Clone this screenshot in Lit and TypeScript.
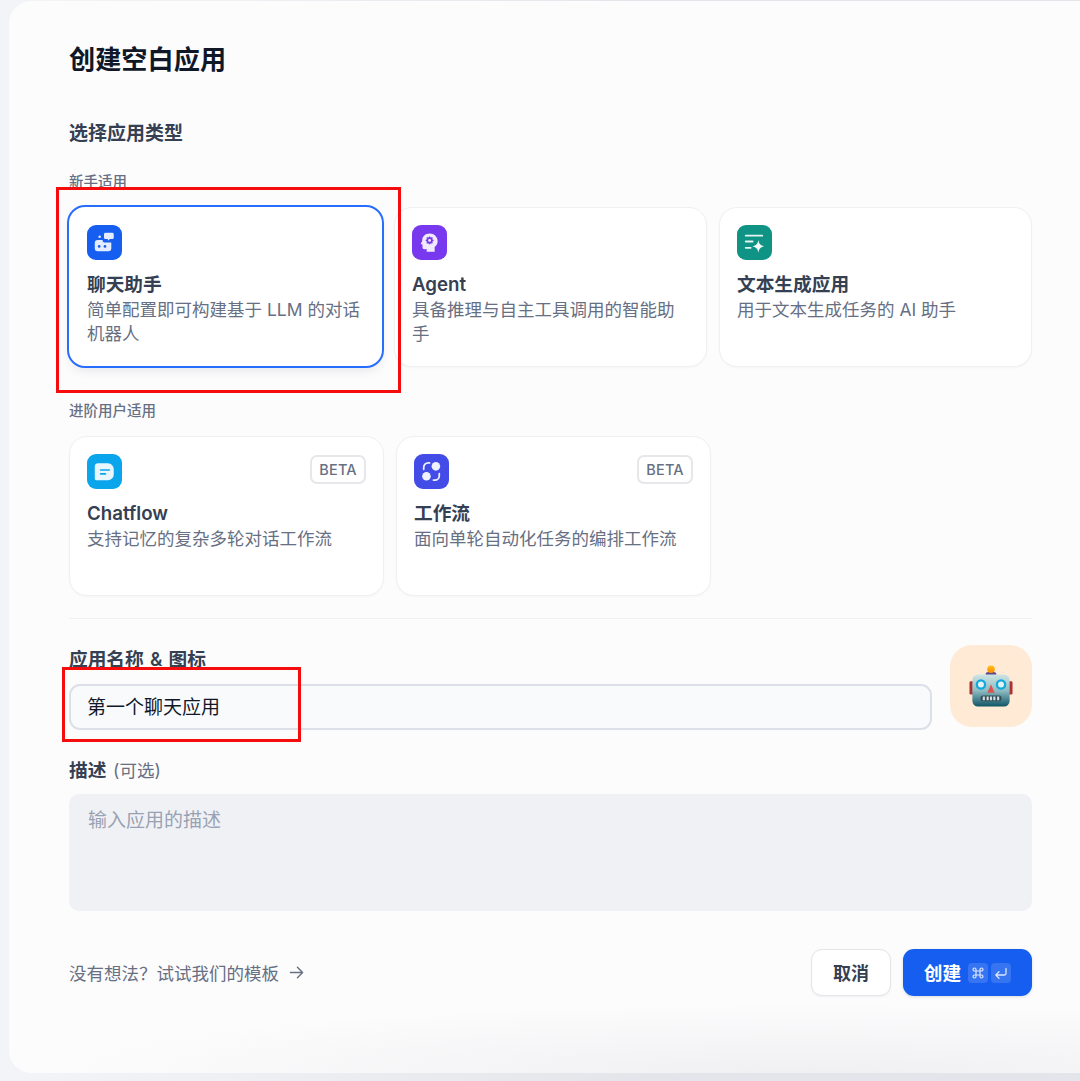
import { LitElement, html, css, svg } from "lit";
import { customElement } from "lit/decorators.js";

const icons: Record<string, unknown> = {
  chat: svg`<circle cx="13" cy="12" r="1.300" fill="#dfe8ff"/><path d="M19 8h7a1.500 1.500 0 0 1 1.500 1.500v3.500a1.500 1.500 0 0 1-1.500 1.500h-2.500l-2 1.800v-1.800H19a1.500 1.500 0 0 1-1.500-1.500V9.500A1.500 1.500 0 0 1 19 8z" fill="#e4ecff"/><path d="M11 15.500h5v.5a2 2 0 0 0 2 2h7v6.500a2.500 2.500 0 0 1-2.500 2.500h-12A2.500 2.500 0 0 1 8 24.500v-6a3 3 0 0 1 3-3z" fill="#e4ecff"/><circle cx="12.500" cy="22" r="1.400" fill="#155eef"/><circle cx="18.500" cy="22" r="1.400" fill="#155eef"/>`,
  agent: svg`<g transform="translate(2 3.200) scale(.87)"><path d="M18.500 6.500c-5 0-8.700 3.400-8.700 8 0 .8-.4 1.400-1.300 3-.5.8-.3 1.400.6 1.700l1 .3v3.200c0 1.500 1 2.300 2.400 2.200l2.500-.2v3.300h9.500v-5.800c2.300-1.600 3.500-4 3.500-6.800 0-4.700-4-8.900-9.500-8.900z" fill="#f1eaff"/><g fill="none" stroke="#7839ee"><circle cx="18.500" cy="14.500" r="2.700" stroke-width="2"/><path d="M18.500 9.800v1.800M18.500 17.400v1.800M13.800 14.500h1.800M21.400 14.500h1.800M15.200 11.200l1.200 1.200M20.600 16.600l1.200 1.200M21.800 11.200l-1.200 1.200M16.400 16.600l-1.200 1.200" stroke-width="1.700"/></g></g>`,
  text: svg`<g stroke="#e6f6f2" stroke-width="1.900" stroke-linecap="round" fill="none"><path d="M9 11h17M9 17h7M9 23.500h5"/></g><path d="M22 15.500c.7 4 2.100 5.600 6.200 6.500-4.100.9-5.500 2.500-6.200 6.500-.7-4-2.100-5.600-6.200-6.500 4.100-.9 5.500-2.500 6.200-6.500z" fill="#f0fbf8"/>`,
  flow: svg`<path d="M11.500 9.500h10a6 6 0 0 1 6 6v5.500a6 6 0 0 1-6 6H9.500A1.500 1.500 0 0 1 8 25.500V13a3.500 3.500 0 0 1 3.500-3.500z" fill="#e8f6fe"/><path d="M14 16.500h9M14 20.500h5" stroke="#0ba5ec" stroke-width="1.700" stroke-linecap="round"/>`,
  work: svg`<circle cx="22.500" cy="12.700" r="4.400" fill="#f0f1ff"/><circle cx="12.800" cy="22.800" r="4.400" fill="#f0f1ff"/><g fill="none" stroke="#f0f1ff" stroke-width="1.800" stroke-linecap="round"><path d="M16 9.200h-1.500A4.500 4.500 0 0 0 10 13.700v2"/><path d="M20 26.800h1.500a4.500 4.500 0 0 0 4.500-4.500v-2"/></g>`,
};

interface Card { icon: string; color: string; title: string; desc: string; beta?: boolean; selected?: boolean; }

const basic: Card[] = [
  { icon: "chat", color: "#155eef", title: "聊天助手", desc: "简单配置即可构建基于 LLM 的对话机器人", selected: true },
  { icon: "agent", color: "#7839ee", title: "Agent", desc: "具备推理与自主工具调用的智能助手" },
  { icon: "text", color: "#0e9384", title: "文本生成应用", desc: "用于文本生成任务的 AI 助手" },
];
const advanced: Card[] = [
  { icon: "flow", color: "#0ba5ec", title: "Chatflow", desc: "支持记忆的复杂多轮对话工作流", beta: true },
  { icon: "work", color: "#444ce7", title: "工作流", desc: "面向单轮自动化任务的编排工作流", beta: true },
];

@customElement("app-root")
export class AppRoot extends LitElement {
  static styles = css`
    :host {
      display: block;
      position: relative;
      height: 1081px;
      overflow: hidden;
      background: linear-gradient(90deg, #f2f4f8 0%, #eff0f4 20%, #e4e5ea 60%, #e4e5ea 100%);
      font-family: Inter, "Noto Sans CJK SC", "Noto Sans", sans-serif;
      color: #354052;
    }
    .dialog {
      box-sizing: border-box;
      margin-left: 9px;
      width: 1090px;
      height: 1072px;
      position: relative;
      top: 1px;
      border-radius: 22px;
      padding: 43px 0 0 60px;
      background:
        radial-gradient(ellipse 760px 70px at 800px 1072px, #f0f0f2 0%, rgba(240, 240, 242, 0) 100%),
        #fcfcfd;
    }
    .body { width: 963px; }
    h1 {
      margin: 0;
      font-size: 26.200px;
      line-height: 32px;
      font-weight: 600;
      color: #101828;
    }
    h2 {
      margin: 45px 0 0;
      font-size: 19px;
      line-height: 26px;
      font-weight: 600;
      color: #354052;
    }
    .group {
      margin: 25px 0 0;
      font-size: 14.500px;
      line-height: 20px;
      font-weight: 500;
      color: #676f83;
    }
    .group.second { margin-top: 34px; }
    .row {
      display: grid;
      gap: 12px;
      margin-top: 15px;
    }
    .row.three { grid-template-columns: 313px 313px 313px; }
    .row.two { grid-template-columns: 315px 315px; }
    .card {
      box-sizing: border-box;
      height: 160px;
      padding: 17px;
      background: #fff;
      border: 1px solid #f0f0f3;
      border-radius: 18px;
      box-shadow: 0 1px 2px rgba(16, 24, 40, 0.03);
    }
    .card.selected {
      border: 2px solid #296dff;
      height: 163px;
      margin: -2px -2px -1px -2px;
      padding: 18px;
      box-shadow: 0 6px 12px -4px rgba(16, 24, 40, 0.1);
    }
    .head {
      display: flex;
      justify-content: space-between;
      align-items: flex-start;
      height: 36px;
    }
    .tile {
      display: block;
      width: 35px;
      height: 35px;
      border-radius: 9px;
    }
    .beta {
      box-sizing: border-box;
      width: 56px;
      height: 29px;
      margin-top: 1px;
      display: flex;
      align-items: center;
      justify-content: center;
      border: 2px solid #e6e7eb;
      border-radius: 7px;
      font-size: 14.500px;
      font-weight: 500;
      letter-spacing: 0.2px;
      color: #676f83;
    }
    .title {
      margin-top: 12px;
      font-size: 18.700px;
      line-height: 24px;
      font-weight: 600;
      color: #354052;
    }
    .desc {
      margin-top: 1px;
      font-size: 17.500px;
      line-height: 24px;
      color: #676f83;
    }
    hr {
      border: 0;
      height: 1px;
      margin: 22px 0 0;
      background: #eff0f3;
    }
    .name-row {
      display: flex;
      gap: 18px;
      margin-top: 26px;
      align-items: flex-start;
    }
    .name-col { flex: 1; padding-top: 3px; }
    .label {
      font-size: 18.700px;
      line-height: 24px;
      font-weight: 600;
      color: #354052;
    }
    .label .amp { margin: 0 1.500px; }
    .label .opt {
      font-weight: 400;
      font-size: 17.500px;
      color: #676f83;
      margin-left: 2px;
    }
    .input {
      box-sizing: border-box;
      height: 46px;
      margin-top: 12px;
      padding: 0 16px 3px;
      display: flex;
      align-items: center;
      background: #f9fafc;
      border: 2px solid #dde0e8;
      border-radius: 11px;
      font-size: 19px;
      color: #101828;
    }
    .emoji {
      width: 82px;
      height: 82px;
      border-radius: 22px;
      background: #ffead5;
      display: flex;
      align-items: center;
      justify-content: center;
      flex: none;
    }
    .desc-label { margin-top: 29px; }
    .area {
      box-sizing: border-box;
      height: 117px;
      margin-top: 11px;
      padding: 14px 19px;
      border-radius: 10px;
      background: #f0f1f5;
      font-size: 19px;
      line-height: 26px;
      color: #98a2b2;
    }
    .foot {
      display: flex;
      align-items: center;
      justify-content: space-between;
      margin-top: 38px;
    }
    .link {
      display: flex;
      align-items: center;
      gap: 10px;
      font-size: 17.500px;
      color: #676f83;
    }
    .actions { display: flex; gap: 12px; }
    .btn {
      box-sizing: border-box;
      height: 47px;
      display: flex;
      align-items: center;
      justify-content: center;
      border-radius: 11px;
      font-size: 18px;
      font-weight: 600;
    }
    .cancel {
      width: 80px;
      padding-bottom: 2px;
      background: #fff;
      border: 1px solid #e4e5e9;
      color: #354052;
      box-shadow: 0 1px 2px rgba(16, 24, 40, 0.05);
    }
    .create {
      width: 129px;
      gap: 3px;
      background: #155eef;
      color: #fff;
      font-size: 18.700px;
      box-shadow: 0 1px 3px rgba(16, 24, 40, 0.15);
    }
    .create .txt { margin: 0 4px 2px 0; }
    .kbd {
      width: 20px;
      height: 20px;
      border-radius: 4px;
      background: rgba(255, 255, 255, 0.14);
      display: flex;
      align-items: center;
      justify-content: center;
    }
    .mark {
      position: absolute;
      box-sizing: border-box;
      border: 3px solid #f50d0d;
    }
    .mark.a { left: 56px; top: 187px; width: 345px; height: 206px; }
    .mark.b { left: 62px; top: 667px; width: 239px; height: 75px; }
  `;

  private card(c: Card) {
    return html`<div class="card ${c.selected ? "selected" : ""}">
      <div class="head">
        <svg class="tile" viewBox="0 0 36 36" style="background:${c.color}">${icons[c.icon]}</svg>
        ${c.beta ? html`<div class="beta">BETA</div>` : ""}
      </div>
      <div class="title">${c.title}</div>
      <div class="desc">${c.desc}</div>
    </div>`;
  }

  private robot() {
    return html`<svg width="44" height="44" viewBox="0 0 46 46">
      <defs>
        <linearGradient id="rb" x1="0" y1="0" x2="0" y2="1">
          <stop offset="0" stop-color="#cfe4e4"/><stop offset="0.5" stop-color="#8fbcc2"/><stop offset="1" stop-color="#0f5566"/>
        </linearGradient>
        <linearGradient id="rl" x1="0" y1="0" x2="0" y2="1">
          <stop offset="0" stop-color="#ffc21f"/><stop offset="1" stop-color="#ff8a00"/>
        </linearGradient>
      </defs>
      <rect x="0.500" y="18" width="5" height="14" rx="1.500" fill="#a93232"/>
      <rect x="40.500" y="18" width="5" height="14" rx="1.500" fill="#a93232"/>
      <path d="M17.500 10c0-2.500 11-2.500 11 0v3h-11z" fill="#5c4a8c"/>
      <circle cx="23" cy="5.500" r="4" fill="url(#rl)"/>
      <rect x="3.500" y="11" width="39" height="33.500" rx="6" fill="url(#rb)"/>
      <circle cx="12.500" cy="21.500" r="4.300" fill="#e4f3f5" stroke="#12a9dc" stroke-width="2.400"/>
      <circle cx="33.500" cy="21.500" r="4.300" fill="#e4f3f5" stroke="#12a9dc" stroke-width="2.400"/>
      <path d="M23 21.500l3.800 8.500h-7.600z" fill="#d9534f"/>
      <rect x="12" y="33" width="22" height="6" rx="2.500" fill="#33505a"/>
      <path d="M15.500 34v4M19.500 34v4M23 34v4M26.500 34v4M30.500 34v4" stroke="#d5e0e2" stroke-width="2.200"/>
    </svg>`;
  }

  render() {
    return html`
      <div class="dialog">
        <div class="body">
          <h1>创建空白应用</h1>
          <h2>选择应用类型</h2>
          <div class="group">新手适用</div>
          <div class="row three">${basic.map((c) => this.card(c))}</div>
          <div class="group second">进阶用户适用</div>
          <div class="row two">${advanced.map((c) => this.card(c))}</div>
          <hr />
          <div class="name-row">
            <div class="name-col">
              <div class="label">应用名称 <span class="amp">&amp;</span> 图标</div>
              <div class="input">第一个聊天应用</div>
            </div>
            <div class="emoji">${this.robot()}</div>
          </div>
          <div class="label desc-label">描述 <span class="opt">(可选)</span></div>
          <div class="area">输入应用的描述</div>
          <div class="foot">
            <div class="link">
              <span>没有想法？试试我们的模板</span>
              <svg width="15" height="15" viewBox="0 0 16 16" fill="none" stroke="#676f83" stroke-width="1.500" stroke-linecap="round" stroke-linejoin="round"><path d="M1.500 8h13M9 2.500L14.500 8 9 13.500"/></svg>
            </div>
            <div class="actions">
              <div class="btn cancel">取消</div>
              <div class="btn create">
                <span class="txt">创建</span>
                <span class="kbd"><svg width="14" height="14" viewBox="0 0 14 14" fill="none" stroke="#dbe6ff" stroke-width="1.200"><path d="M5 5h4v4H5zM5 5H3.500A1.500 1.500 0 1 1 5 3.500zM9 5V3.500A1.500 1.500 0 1 1 10.500 5zM9 9h1.500A1.500 1.500 0 1 1 9 10.500zM5 9v1.500A1.500 1.500 0 1 1 3.500 9z"/></svg></span>
                <span class="kbd"><svg width="14" height="14" viewBox="0 0 14 14" fill="none" stroke="#dbe6ff" stroke-width="1.300" stroke-linecap="round" stroke-linejoin="round"><path d="M12 2.500v5a1.500 1.500 0 0 1-1.500 1.500H2M5 5.800L1.800 9 5 12.200"/></svg></span>
              </div>
            </div>
          </div>
        </div>
      </div>
      <div class="mark a"></div>
      <div class="mark b"></div>
    `;
  }
}
